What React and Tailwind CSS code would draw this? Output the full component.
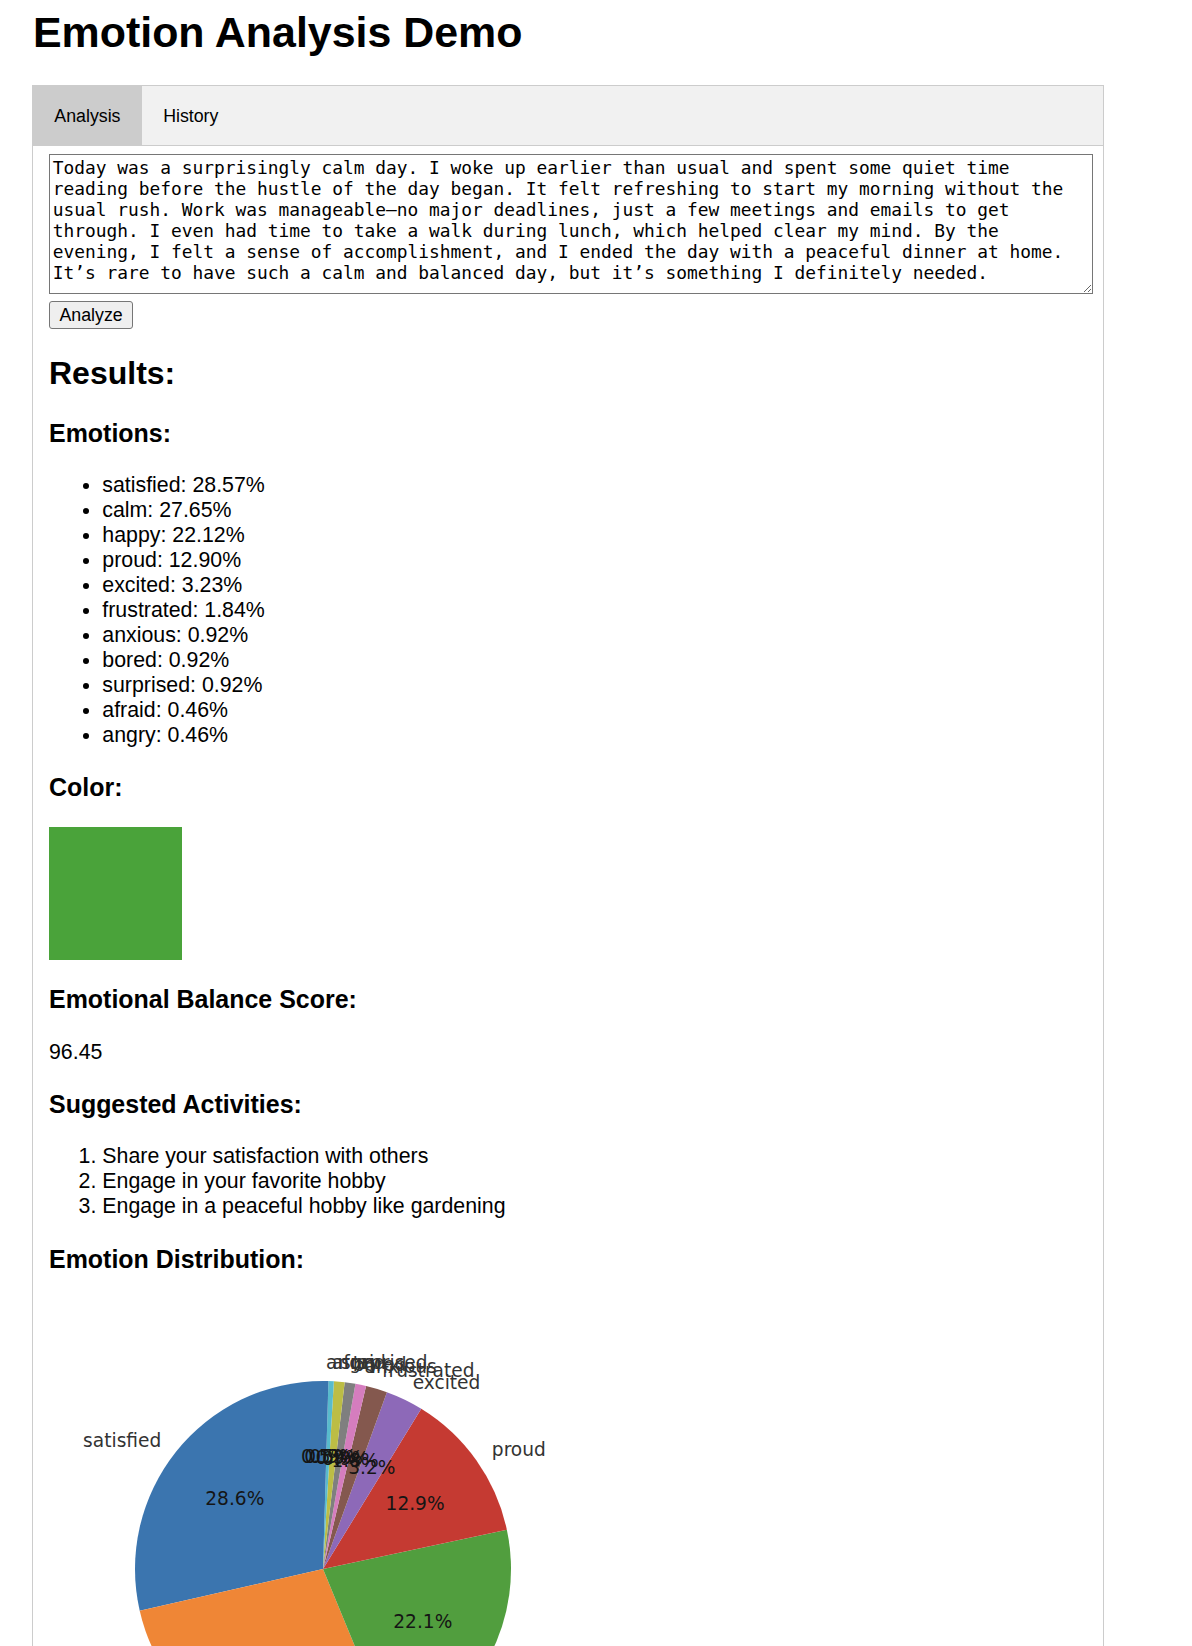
import React from 'react';

const EMOTIONS = [
  ['satisfied', 28.57],
  ['calm', 27.65],
  ['happy', 22.12],
  ['proud', 12.9],
  ['excited', 3.23],
  ['frustrated', 1.84],
  ['anxious', 0.92],
  ['bored', 0.92],
  ['surprised', 0.92],
  ['afraid', 0.46],
  ['angry', 0.46],
];

const ACTIVITIES = [
  'Share your satisfaction with others',
  'Engage in your favorite hobby',
  'Engage in a peaceful hobby like gardening',
];

// matplotlib tab10, as it shows in the screenshot
const PIE_COLORS = ['#3b75af', '#ef8636', '#519e3e', '#c53a32', '#8d69b8', '#84584e', '#d57dbe', '#7f7f7f', '#bcbd45', '#58bbcc'];

const JOURNAL = 'Today was a surprisingly calm day. I woke up earlier than usual and spent some quiet time reading before the hustle of the day began. It felt refreshing to start my morning without the usual rush. Work was manageable—no major deadlines, just a few meetings and emails to get through. I even had time to take a walk during lunch, which helped clear my mind. By the evening, I felt a sense of accomplishment, and I ended the day with a peaceful dinner at home. It’s rare to have such a calm and balanced day, but it’s something I definitely needed.';

function PieChart() {
  const cx = 274;
  const cy = 279;
  const r = 188;
  const total = EMOTIONS.reduce((sum, [, v]) => sum + v, 0);
  const pt = (deg, rad) => [cx + rad * Math.cos((deg * Math.PI) / 180), cy - rad * Math.sin((deg * Math.PI) / 180)];

  let angle = 90;
  const slices = EMOTIONS.map(([name, value], i) => {
    const sweep = (value / total) * 360;
    const start = angle;
    const end = angle + sweep;
    angle = end;
    const [x1, y1] = pt(start, r);
    const [x2, y2] = pt(end, r);
    const d = `M ${cx} ${cy} L ${x1} ${y1} A ${r} ${r} 0 ${sweep > 180 ? 1 : 0} 0 ${x2} ${y2} Z`;
    return { name, d, mid: (start + end) / 2, color: PIE_COLORS[i % 10], pct: ((value / total) * 100).toFixed(1) + '%' };
  });

  return (
    <svg width="640" height="480" className="block mt-[16.7px]">
      {slices.map(s => (
        <path key={s.name} d={s.d} fill={s.color} />
      ))}
      {slices.map(s => {
        const [lx, ly] = pt(s.mid, r * 1.1);
        return (
          <text
            key={s.name + '-label'}
            x={lx}
            y={ly}
            textAnchor={lx > cx ? 'start' : 'end'}
            dominantBaseline="central"
            fontFamily="'DejaVu Sans', sans-serif"
            fontSize="18.6"
            fill="#333333"
          >
            {s.name}
          </text>
        );
      })}
      {slices.map(s => {
        const [px, py] = pt(s.mid, r * 0.6);
        return (
          <text
            key={s.name + '-pct'}
            x={px}
            y={py}
            textAnchor="middle"
            dominantBaseline="central"
            fontFamily="'DejaVu Sans', sans-serif"
            fontSize="18.6"
            fill="#151515"
          >
            {s.pct}
          </text>
        );
      })}
    </svg>
  );
}

export default function App() {
  return (
    <div className="min-h-screen bg-white text-black pt-[7.5px] pb-[40px] font-['Liberation_Sans',Arial,sans-serif]">
      <h1 className="pl-[33px] text-[42.9px] leading-[49px] font-bold">Emotion Analysis Demo</h1>

      <div className="ml-[32px] mt-[28.5px] w-[1072px]">
        {/* tab bar */}
        <div className="flex h-[61px] border border-[#cccccc] bg-[#f1f1f1]">
          <button className="h-full px-[21.33px] bg-[#cccccc] text-[17.78px] leading-[20px] text-black">Analysis</button>
          <button className="h-full px-[21.33px] text-[17.78px] leading-[20px] text-black">History</button>
        </div>

        {/* tab content */}
        <div className="border-x border-b border-[#cccccc] pl-[16px] pr-[16px] pt-[8px]">
          <div className="flex flex-col items-start gap-[7px]">
            <textarea
              className="block w-[1044px] h-[140px] border border-[#767676] px-[2.67px] pt-[2px] pb-[2.67px] bg-white text-[17.87px] leading-[21px] text-black font-['DejaVu_Sans_Mono',monospace] resize"
              defaultValue={JOURNAL}
              spellCheck={false}
            />
            <button className="h-[28px] px-[9.5px] bg-[#efefef] border border-[#767676] rounded-[3px] text-[17.78px] leading-[20px] text-black">
              Analyze
            </button>
          </div>

          <h2 className="mt-[26px] text-[32px] leading-[37px] font-bold">Results:</h2>

          <h3 className="mt-[26.6px] text-[24.96px] leading-[28.7px] font-bold">Emotions:</h3>
          <ul className="mt-[25.5px] list-disc pl-[53.33px] text-[21.33px] leading-[25px]">
            {EMOTIONS.map(([name, value]) => (
              <li key={name}>
                {name}: {value.toFixed(2)}%
              </li>
            ))}
          </ul>

          <h3 className="mt-[25.2px] text-[24.96px] leading-[28.7px] font-bold">Color:</h3>
          <div className="mt-[25px] w-[133.33px] h-[133.33px] bg-[#4aa33a]" />

          <h3 className="mt-[25.3px] text-[24.96px] leading-[28.7px] font-bold">Emotional Balance Score:</h3>
          <p className="mt-[26.1px] text-[21.33px] leading-[25px]">96.45</p>

          <h3 className="mt-[24.9px] text-[24.96px] leading-[28.7px] font-bold">Suggested Activities:</h3>
          <ol className="mt-[24.9px] list-decimal pl-[53.33px] text-[21.33px] leading-[25px]">
            {ACTIVITIES.map(a => (
              <li key={a}>{a}</li>
            ))}
          </ol>

          <h3 className="mt-[26px] text-[24.96px] leading-[28.7px] font-bold">Emotion Distribution:</h3>
          <PieChart />
        </div>
      </div>
    </div>
  );
}
